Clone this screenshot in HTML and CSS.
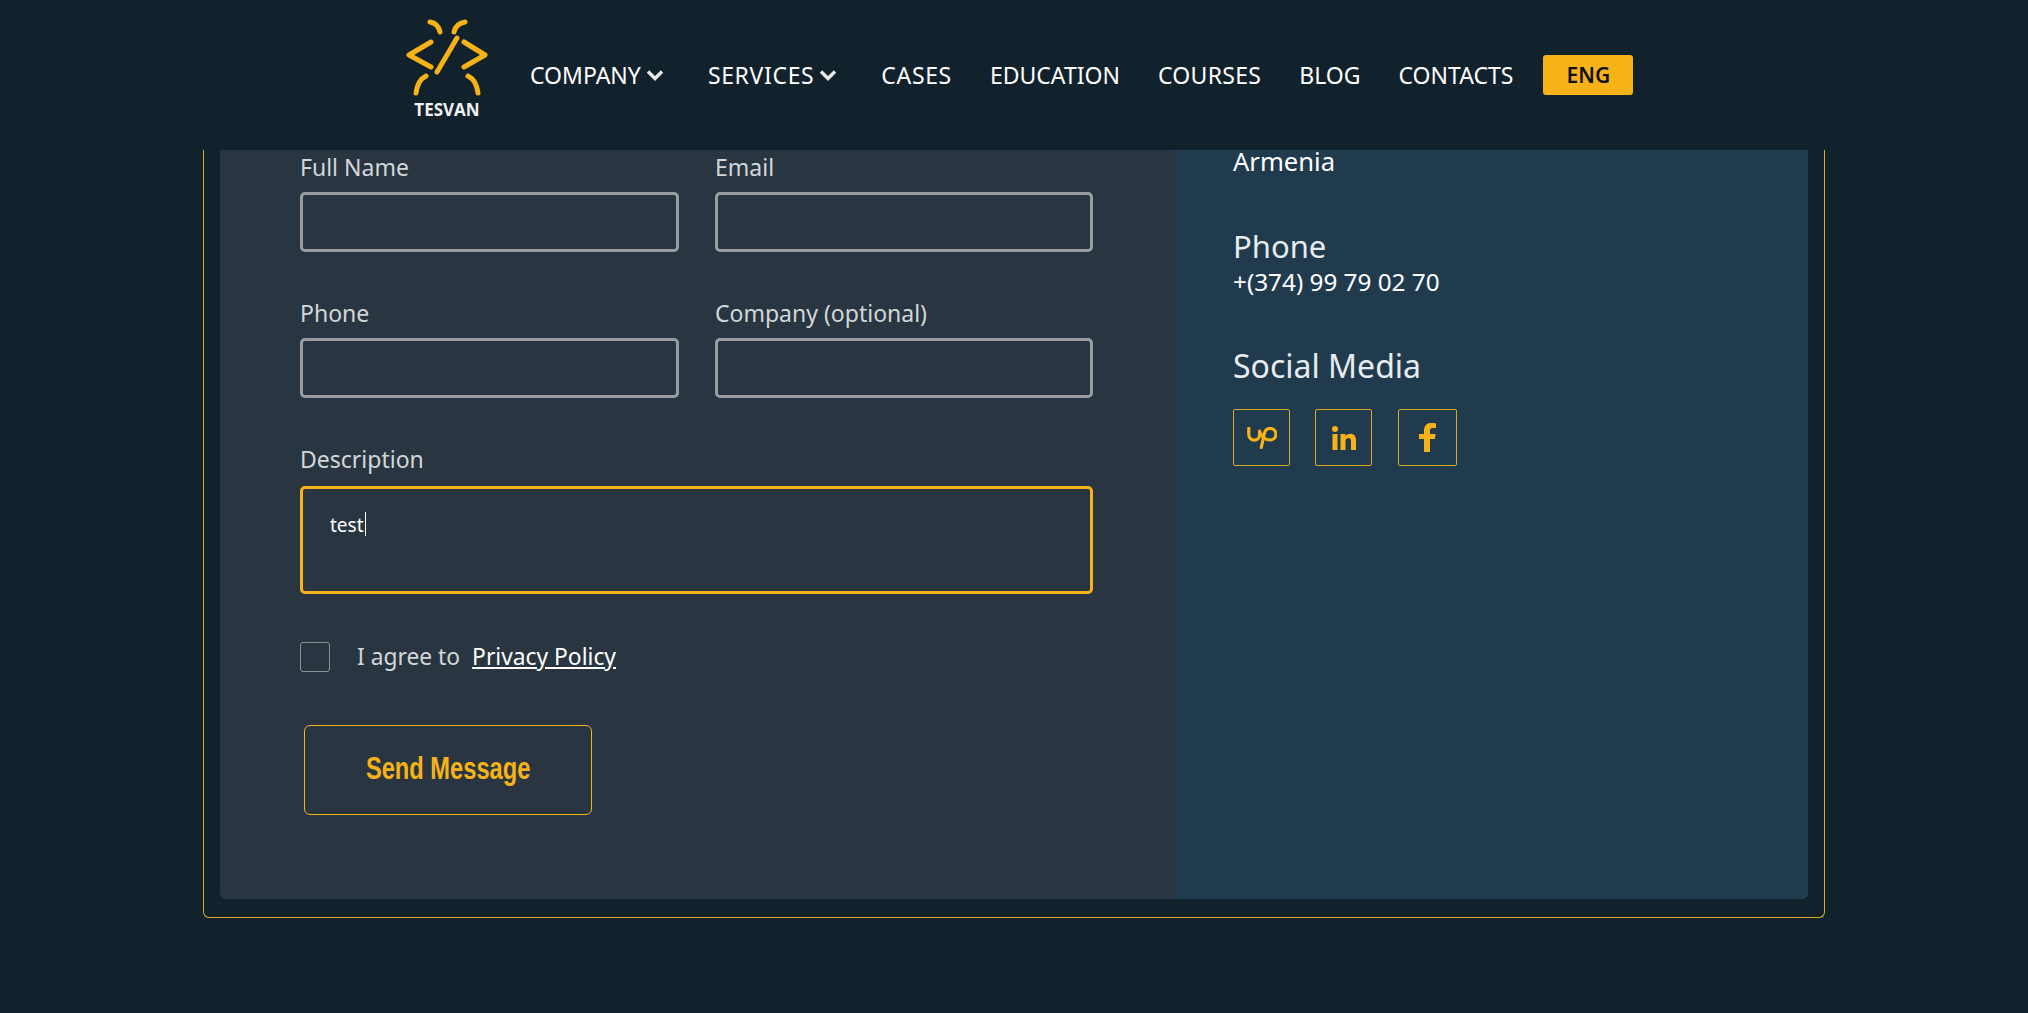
FILE: index.html

```html
<!DOCTYPE html>
<html lang="en">
<head>
  <meta charset="UTF-8">
  <title>Tesvan - Contacts</title>
  <link rel="stylesheet" href="styles.css">
</head>
<body>
  <header class="site-header">
    <a class="logo" href="#">
      <svg class="logo-mark" viewBox="405 18 84 80" fill="none" stroke="#f7b217" stroke-width="5" stroke-linecap="round" stroke-linejoin="round">
        <path d="M431 42 409 55 431 67"/>
        <path d="M457 38 437 72"/>
        <path d="M464 42 485 55 464 67"/>
        <path d="M430 22C436 23 439 27 440 32"/>
        <path d="M465 22C459 23 455 27 454 32"/>
        <path d="M426 76C420 79 417 85 416 93"/>
        <path d="M468 76C474 79 477 85 478 93"/>
      </svg>
      <span class="logo-text">TESVAN</span>
    </a>
    <nav class="nav">
      <a href="#">COMPANY <svg class="caret" viewBox="0 0 18 12"><path d="M2 2.5 9 9.5 16 2.5"/></svg></a>
      <a class="nav-wide" href="#">SERVICES <svg class="caret" viewBox="0 0 18 12"><path d="M2 2.5 9 9.5 16 2.5"/></svg></a>
      <a class="nav-wide" href="#">CASES</a>
      <a href="#">EDUCATION</a>
      <a class="nav-courses" href="#">COURSES</a>
      <a href="#">BLOG</a>
      <a href="#">CONTACTS</a>
      <button class="lang">ENG</button>
    </nav>
  </header>

  <main class="contact">
    <div class="contact-card">
      <form class="contact-form">
        <div class="form-grid">
          <div class="field">
            <label>Full Name</label>
            <input type="text">
          </div>
          <div class="field">
            <label>Email</label>
            <input type="text">
          </div>
          <div class="field">
            <label>Phone</label>
            <input type="text">
          </div>
          <div class="field">
            <label>Company (optional)</label>
            <input type="text">
          </div>
          <div class="field field-wide">
            <label>Description</label>
            <div class="textarea">test<span class="text-caret"></span></div>
          </div>
        </div>
        <div class="agree">
          <span class="checkbox"></span>
          <span class="agree-text">I agree to</span>
          <a href="#">Privacy Policy</a>
        </div>
        <button class="send" type="button"><span>Send Message</span></button>
      </form>

      <aside class="contact-info">
        <p class="info-value">Armenia</p>
        <h3>Phone</h3>
        <p class="info-value info-phone">+(374) 99 79 02 70</p>
        <h3 class="social-title">Social Media</h3>
        <div class="social">
          <a href="#">
            <svg class="icon-up" viewBox="0 0 30 22" fill="none" stroke="#f7b217" stroke-width="3.2" stroke-linecap="round">
              <path d="M1.8 1V7.800A5.400 5.400 0 0 0 12.600 7.800V4"/>
              <path d="M12.600 5C15 10 18 13 23 13A5.800 5.800 0 1 0 17.600 5.500L14.300 20.500"/>
            </svg>
          </a>
          <a href="#">
            <svg class="icon-in" viewBox="0 0 24 24" fill="#f7b217">
              <circle cx="3" cy="3" r="3"/>
              <rect x="0.5" y="8" width="5" height="16"/>
              <path d="M8.500 8H13.300V10.200C14.200 8.700 15.900 7.700 18.200 7.700C22.300 7.700 24 10.300 24 14.500V24H19V15.400C19 13.200 18.300 12 16.500 12C14.600 12 13.500 13.300 13.500 15.400V24H8.500Z"/>
            </svg>
          </a>
          <a class="social-wide" href="#">
            <svg class="icon-f" viewBox="0 0 17 29" fill="#f7b217">
              <path d="M5 29V16H0V11H5V7.500C5 2.500 8 0 12 0C14 0 16 .2 17 .4V5H14C11.500 5 11 6.200 11 8V11H16.600L15.800 16H11V29Z"/>
            </svg>
          </a>
        </div>
      </aside>
    </div>
  </main>
</body>
</html>
```

FILE: styles.css

```css
/* Reset */
* { margin: 0; padding: 0; box-sizing: border-box; }
html, body {
  height: 100%;
  overflow: hidden;
}
body {
  background: #12222c;
  color: #ffffff;
  font-family: 'Noto Sans', 'Open Sans', sans-serif;
}
a { color: inherit; text-decoration: none; }

/* Header */
.site-header {
  position: relative;
  z-index: 1;
  display: flex;
  align-items: center;
  height: 150px;
  padding-left: 407px;
}
.logo {
  display: flex;
  flex-direction: column;
  align-items: center;
  width: 80px;
  padding-bottom: 13px;
}
.logo-mark {
  width: 84px;
  height: 80px;
  flex-shrink: 0;
}
.logo-text {
  margin-top: 2px;
  font-family: 'Open Sans', sans-serif;
  font-size: 17px;
  line-height: 20px;
  font-weight: 700;
  color: #f0f1f2;
}
.nav {
  display: flex;
  align-items: center;
  gap: 38px;
  margin-left: 43px;
  font-size: 23px;
}
.nav a {
  display: flex;
  align-items: center;
  gap: 5px;
  white-space: nowrap;
}
.nav .nav-wide { letter-spacing: 0.65px; }
.nav .nav-courses { letter-spacing: 0.3px; }
.caret {
  width: 18px;
  height: 12px;
  margin-right: 6px;
  fill: none;
  stroke: #e8e8e8;
  stroke-width: 3.4;
}
.lang {
  width: 90px;
  height: 40px;
  margin-left: -8px;
  border: 0;
  border-radius: 3px;
  background: #f7b217;
  color: #0c1014;
  font: 600 21px 'Noto Sans', sans-serif;
}

/* Contact block */
.contact {
  width: 1622px;
  margin-left: 203px;
  padding: 0 16px 18px;
  border: 1px solid #dca826;
  border-top: 0;
  border-radius: 0 0 6px 6px;
}
.contact-card {
  display: grid;
  grid-template-columns: 954px 634px;
  height: 749px;
}
.contact-form {
  padding: 1px 80px 0;
  background: #293641;
  border-radius: 0 0 0 6px;
}
.form-grid {
  display: grid;
  grid-template-columns: 379px 378px;
  column-gap: 36px;
  row-gap: 45px;
}
.field label {
  display: block;
  height: 41px;
  font-size: 23px;
  line-height: 32px;
  color: #d3d6d9;
}
.field input {
  display: block;
  width: 100%;
  height: 60px;
  border: 3px solid #9a9d9f;
  border-radius: 5px;
  background: transparent;
}
.field-wide { grid-column: 1 / 3; }
.field-wide label { height: 43px; }
.textarea {
  display: flex;
  align-items: flex-start;
  height: 108px;
  padding: 23px 27px;
  border: 3px solid #f7b217;
  border-radius: 5px;
  font-size: 19px;
  line-height: 26px;
}
.text-caret {
  width: 1px;
  height: 24px;
  margin-left: 1px;
  background: #ffffff;
}
.agree {
  display: flex;
  align-items: center;
  height: 30px;
  margin-top: 48px;
  font-size: 22.8px;
  color: #d3d6d9;
}
.agree-text, .agree a { margin-bottom: 2px; }
.checkbox {
  width: 30px;
  height: 30px;
  margin-right: 27px;
  border: 1px solid #8a9096;
  border-radius: 3px;
}
.agree a {
  margin-left: 12px;
  color: #ffffff;
  text-decoration: underline;
}
.send {
  display: block;
  width: 288px;
  height: 90px;
  margin: 53px 0 0 4px;
  border: 1px solid #f7b217;
  border-radius: 6px;
  background: transparent;
  color: #f7b217;
  font: 700 32px 'Liberation Sans', sans-serif;
}
/* no condensed face installed, so squeeze the bold one */
.send span {
  display: inline-block;
  white-space: nowrap;
  transform: translateY(-2px) scaleX(0.74);
}

/* Right column */
.contact-info {
  padding: 0 59px;
  background: #203b4e;
  border-radius: 0 0 6px 0;
}
.info-value {
  font-size: 25.6px;
  line-height: 24px;
}
.info-phone {
  margin-top: 2px;
  font-size: 24.3px;
  line-height: 28px;
}
.contact-info h3 {
  margin-top: 52px;
  font-size: 31px;
  line-height: 40px;
  font-weight: 400;
  color: #e8ecef;
}
.contact-info .social-title {
  margin-top: 50px;
  font-size: 32px;
}
.social {
  display: flex;
  gap: 25px;
  margin-top: 23px;
}
.social a {
  display: flex;
  align-items: center;
  justify-content: center;
  width: 57px;
  height: 57px;
  border: 1px solid #e0a81e;
  border-radius: 2px;
}
.social .social-wide {
  width: 59px;
  margin-left: 1px;
}
.icon-up { width: 30px; height: 22px; }
.icon-in { width: 24px; height: 24px; }
.icon-f { width: 17px; height: 29px; }
```
